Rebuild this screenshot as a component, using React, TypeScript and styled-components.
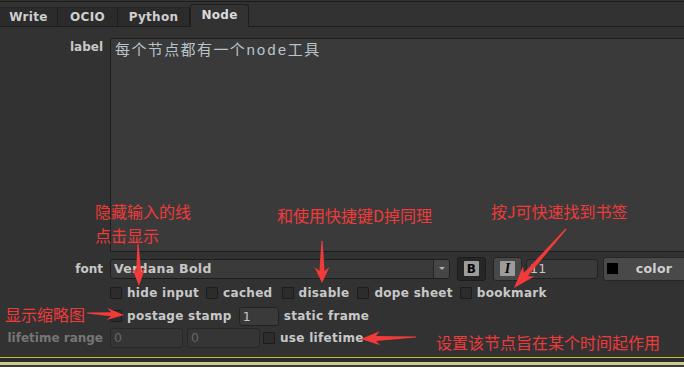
import React from 'react';
import styled, { createGlobalStyle } from 'styled-components';

const GlobalStyle = createGlobalStyle`
	html, body {
		margin: 0;
		padding: 0;
		background: #323232;
	}
`;

const Root = styled.div`
	position: relative;
	width: 684px;
	height: 367px;
	overflow: hidden;
	background: #323232;
	display: flex;
	flex-direction: column;
	font-family: 'DejaVu Sans', Verdana, sans-serif;
	font-weight: bold;
	font-size: 12px;
	letter-spacing: 0.3px;
	color: #c8c8c8;
`;

const TopRule = styled.div`
	height: 1px;
	margin-top: 1px;
	background: #1c1c1c;
`;

const TabBar = styled.div`
	display: flex;
	align-items: flex-end;
	height: 24px;
	border-bottom: 1px solid #1e1e1e;
`;

const Tab = styled.div<{ $active?: boolean; $w: number }>`
	box-sizing: border-box;
	width: ${(p) => p.$w}px;
	height: ${(p) => (p.$active ? '23px' : '19px')};
	margin-bottom: ${(p) => (p.$active ? '-1px' : '0')};
	display: flex;
	align-items: center;
	justify-content: center;
	background: ${(p) => (p.$active ? '#323232' : '#2b2b2b')};
	color: ${(p) => (p.$active ? '#dcdcdc' : '#cfcfcf')};
	border: 1px solid #1e1e1e;
	border-bottom: none;
	border-left: ${(p) => (p.$active ? '1px solid #1e1e1e' : 'none')};
	border-top-color: ${(p) => (p.$active ? '#1e1e1e' : '#262626')};
	border-radius: ${(p) => (p.$active ? '3px 3px 0 0' : '0')};
	padding-bottom: ${(p) => (p.$active ? '3px' : '0')};
`;

const Form = styled.div`
	display: grid;
	grid-template-columns: 103px 1fr;
	grid-template-rows: 218px 25px 24px 22px 21px;
	column-gap: 7px;
	padding-top: 11px;
	margin-right: -8px;
`;

const FieldLabel = styled.div<{ $dim?: boolean; $top?: boolean }>`
	display: flex;
	justify-content: flex-end;
	align-items: ${(p) => (p.$top ? 'flex-start' : 'center')};
	padding-top: ${(p) => (p.$top ? '2px' : '0')};
	line-height: 14px;
	letter-spacing: 0;
	color: ${(p) => (p.$dim ? '#767676' : '#c8c8c8')};
	white-space: nowrap;
`;

const Field = styled.div<{ $top?: boolean }>`
	display: flex;
	align-items: ${(p) => (p.$top ? 'flex-start' : 'center')};
	min-width: 0;
`;

const TextArea = styled.div`
	box-sizing: border-box;
	flex: 1;
	height: 214px;
	background: #3a3a3a;
	border: 1px solid #1e1e1e;
	border-right: none;
	padding: 4px 4px;
	font-family: 'Liberation Mono', 'Noto Sans CJK SC', monospace;
	font-weight: normal;
	font-size: 15px;
	letter-spacing: 1.4px;
	line-height: 18px;
	color: #b9c3cb;
`;

const Dropdown = styled.div`
	box-sizing: border-box;
	width: 340px;
	height: 20px;
	display: flex;
	background: #3a3a3a;
	border: 1px solid #1e1e1e;
	border-radius: 3px;
	overflow: hidden;
`;

const DropdownText = styled.div`
	flex: 1;
	padding-left: 3px;
	display: flex;
	align-items: center;
	font-size: 12.5px;
	color: #c8c8c8;
`;

const DropdownArrow = styled.div`
	width: 15px;
	background: #464646;
	border-left: 1px solid #262626;
	display: flex;
	align-items: center;
	justify-content: center;

	&::after {
		content: '';
		border-left: 3px solid transparent;
		border-right: 3px solid transparent;
		border-top: 3px solid #b0b0b0;
	}
`;

const ToggleButton = styled.div<{ $pressed?: boolean }>`
	box-sizing: border-box;
	width: 29px;
	height: 24px;
	margin-left: 7px;
	display: flex;
	align-items: center;
	justify-content: center;
	background: ${(p) => (p.$pressed ? '#262626' : '#484848')};
	border: 1px solid ${(p) => (p.$pressed ? '#1c1c1c' : '#242424')};
	border-radius: 3px;
`;

const ToggleGlyph = styled.span<{ $italic?: boolean }>`
	width: 15px;
	height: 15px;
	border-radius: 1px;
	background: #9c9c9c;
	color: #050505;
	display: flex;
	align-items: center;
	justify-content: center;
	font-family: ${(p) => (p.$italic ? "'Liberation Serif', serif" : "'DejaVu Sans', sans-serif")};
	font-style: ${(p) => (p.$italic ? 'italic' : 'normal')};
	font-weight: 900;
	font-size: ${(p) => (p.$italic ? '14px' : '12px')};
	line-height: 1;
`;

const InputBox = styled.div<{ $w: number; $h?: number; $ml?: number; $disabled?: boolean }>`
	box-sizing: border-box;
	width: ${(p) => p.$w}px;
	height: ${(p) => p.$h ?? 20}px;
	margin-left: ${(p) => p.$ml ?? 0}px;
	padding-left: 3px;
	display: flex;
	align-items: center;
	background: ${(p) => (p.$disabled ? '#353535' : '#3a3a3a')};
	border: 1px solid ${(p) => (p.$disabled ? '#272727' : '#222222')};
	border-radius: 3px;
	color: ${(p) => (p.$disabled ? '#666666' : '#c8c8c8')};
	font-weight: normal;
	font-size: 12.5px;
	flex-shrink: 0;
`;

const ColorButton = styled.div`
	box-sizing: border-box;
	width: 88px;
	height: 24px;
	margin-left: 5px;
	padding-left: 3px;
	display: flex;
	align-items: center;
	background: #494949;
	border: 1px solid #262626;
	border-radius: 3px;
	flex-shrink: 0;
`;

const Swatch = styled.span`
	width: 11px;
	height: 11px;
	background: #000;
`;

const ColorLabel = styled.span`
	flex: 1;
	text-align: center;
	color: #cfcfcf;
	font-size: 12.5px;
`;

const CheckItem = styled.label<{ $ml?: number }>`
	display: flex;
	align-items: center;
	gap: 5px;
	margin-left: ${(p) => p.$ml ?? 0}px;
	white-space: nowrap;
	flex-shrink: 0;
`;

const Box = styled.span`
	box-sizing: border-box;
	width: 12px;
	height: 12px;
	background: #2c2c2c;
	border: 1px solid #1c1c1c;
	border-radius: 1px;
`;

const Plain = styled.span<{ $ml?: number }>`
	margin-left: ${(p) => p.$ml ?? 0}px;
	white-space: nowrap;
`;

const Spacer = styled.div`
	flex: 1;
`;

const Footer = styled.div`
	height: 10px;
	background: linear-gradient(
		to bottom,
		#c3be2c 0,
		#c3be2c 1px,
		#2b2b2b 1px,
		#2b2b2b 5px,
		#cbcb8e 5px,
		#cbcb8e 8px,
		#3a3a3a 8px
	);
`;

const Overlay = styled.svg`
	position: absolute;
	left: 0;
	top: 0;
	width: 684px;
	height: 367px;
	pointer-events: none;
`;

const Note = styled.span<{ $x: number; $y: number }>`
	position: absolute;
	left: ${(p) => p.$x}px;
	top: ${(p) => p.$y}px;
	font-family: 'Noto Sans CJK SC', 'Noto Sans', sans-serif;
	font-weight: normal;
	font-size: 16px;
	line-height: 16px;
	letter-spacing: 0;
	color: #f03a3a;
	white-space: nowrap;
`;

type Arrow = { t: [number, number]; p: [number, number]; hl: number; hw: number; sw: number };

const arrows: Arrow[] = [
	{ t: [138, 244], p: [139, 286], hl: 18, hw: 13, sw: 5 },
	{ t: [322, 241], p: [322, 283], hl: 16, hw: 15, sw: 5 },
	{ t: [566, 229], p: [514, 288], hl: 22, hw: 15, sw: 5 },
	{ t: [87, 313], p: [124, 315], hl: 17, hw: 12, sw: 4 },
	{ t: [416, 337], p: [361, 339], hl: 19, hw: 14, sw: 5 },
];

const arrowPoints = ({ t, p, hl, hw, sw }: Arrow) => {
	const dx = p[0] - t[0];
	const dy = p[1] - t[1];
	const len = Math.hypot(dx, dy);
	const ux = dx / len;
	const uy = dy / len;
	const nx = -uy;
	const ny = ux;
	const bx = p[0] - ux * hl;
	const by = p[1] - uy * hl;
	const jx = bx + ux * 4;
	const jy = by + uy * 4;
	const pts = [
		[t[0] + nx * 0.6, t[1] + ny * 0.6],
		[jx + (nx * sw) / 2, jy + (ny * sw) / 2],
		[bx + (nx * hw) / 2, by + (ny * hw) / 2],
		[p[0], p[1]],
		[bx - (nx * hw) / 2, by - (ny * hw) / 2],
		[jx - (nx * sw) / 2, jy - (ny * sw) / 2],
		[t[0] - nx * 0.6, t[1] - ny * 0.6],
	];
	return pts.map(([x, y]) => `${x.toFixed(1)},${y.toFixed(1)}`).join(' ');
};

const App: React.FC = () => {
	return (
		<Root>
			<GlobalStyle />
			<TopRule />
			<TabBar>
				<Tab $w={58}>Write</Tab>
				<Tab $w={60}>OCIO</Tab>
				<Tab $w={72}>Python</Tab>
				<Tab $w={59} $active>
					Node
				</Tab>
			</TabBar>
			<Form>
				<FieldLabel $top>label</FieldLabel>
				<Field $top>
					<TextArea>每个节点都有一个node工具</TextArea>
				</Field>

				<FieldLabel>font</FieldLabel>
				<Field>
					<Dropdown>
						<DropdownText>Verdana Bold</DropdownText>
						<DropdownArrow />
					</Dropdown>
					<ToggleButton $pressed>
						<ToggleGlyph>B</ToggleGlyph>
					</ToggleButton>
					<ToggleButton>
						<ToggleGlyph $italic>I</ToggleGlyph>
					</ToggleButton>
					<InputBox $w={72} $ml={4}>
						11
					</InputBox>
					<ColorButton>
						<Swatch />
						<ColorLabel>color</ColorLabel>
					</ColorButton>
				</Field>

				<FieldLabel />
				<Field>
					<CheckItem>
						<Box />
						hide input
					</CheckItem>
					<CheckItem $ml={7}>
						<Box />
						cached
					</CheckItem>
					<CheckItem $ml={9}>
						<Box />
						disable
					</CheckItem>
					<CheckItem $ml={8}>
						<Box />
						dope sheet
					</CheckItem>
					<CheckItem $ml={7}>
						<Box />
						bookmark
					</CheckItem>
				</Field>

				<FieldLabel />
				<Field>
					<CheckItem>
						<Box />
						postage stamp
					</CheckItem>
					<InputBox $w={40} $h={19} $ml={7}>
						1
					</InputBox>
					<Plain $ml={5}>static frame</Plain>
				</Field>

				<FieldLabel $dim>lifetime range</FieldLabel>
				<Field>
					<InputBox $w={73} $disabled>
						0
					</InputBox>
					<InputBox $w={73} $ml={4} $disabled>
						0
					</InputBox>
					<CheckItem $ml={3}>
						<Box />
						use lifetime
					</CheckItem>
				</Field>
			</Form>
			<Spacer />
			<Footer />

			<Note $x={95} $y={203}>隐藏输入的线</Note>
			<Note $x={95} $y={227}>点击显示</Note>
			<Note $x={277} $y={207}>和使用快捷键D掉同理</Note>
			<Note $x={491} $y={203}>按J可快速找到书签</Note>
			<Note $x={5} $y={306}>显示缩略图</Note>
			<Note $x={436} $y={334}>设置该节点旨在某个时间起作用</Note>

			<Overlay viewBox="0 0 684 367">
				{arrows.map((a, i) => (
					<polygon key={i} points={arrowPoints(a)} fill="#f23a3a" />
				))}
			</Overlay>
		</Root>
	);
};

export default App;
